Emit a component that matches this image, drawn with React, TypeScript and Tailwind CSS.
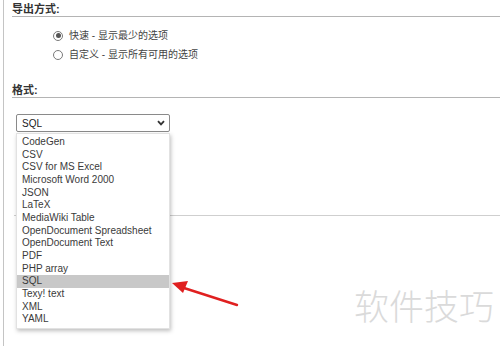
import React from "react";

const formats = [
  "CodeGen",
  "CSV",
  "CSV for MS Excel",
  "Microsoft Word 2000",
  "JSON",
  "LaTeX",
  "MediaWiki Table",
  "OpenDocument Spreadsheet",
  "OpenDocument Text",
  "PDF",
  "PHP array",
  "SQL",
  "Texy! text",
  "XML",
  "YAML",
];

const Radio = ({ checked, label }: { checked?: boolean; label: string }) => (
  <div className="flex items-center h-[19px]">
    <span className="w-[10px] h-[10px] rounded-full border border-[#7a7a7a] bg-white flex items-center justify-center">
      {checked && <span className="w-[5px] h-[5px] rounded-full bg-[#555]" />}
    </span>
    <span className="ml-[6px] text-[10px] text-[#444]">{label}</span>
  </div>
);

export default function App() {
  return (
    <div
      className="relative w-[500px] h-[346px] overflow-hidden bg-white"
      style={{ fontFamily: '"Liberation Sans", Arial, "Noto Sans CJK SC", sans-serif' }}
    >
      <div className="ml-[3px] h-full border-l border-[#c4c4c4] pl-[8px]">
        <div className="pt-[3px] leading-[13px] text-[11px] font-bold text-[#333] border-b border-[#b4b4b4]">
          导出方式:
        </div>
        <div className="mt-[9px] ml-[41px]">
          <Radio checked label="快速 - 显示最少的选项" />
          <Radio label="自定义 - 显示所有可用的选项" />
        </div>
        <div className="mt-[20px] leading-[13px] text-[11px] font-bold text-[#333] border-b border-[#b4b4b4]">
          格式:
        </div>
        <div className="relative mt-[16px] ml-[4px] w-[154px]">
          <div className="h-[18px] border border-[#8a8a8a] rounded-[2px] flex items-center justify-between pl-[5px] pr-[4px] text-[10px] text-[#222]">
            <span>SQL</span>
            <svg width="8" height="6" viewBox="0 0 8 6">
              <path d="M1 1.2 L4 4.4 L7 1.2" fill="none" stroke="#333" strokeWidth="1.8" />
            </svg>
          </div>
          <div className="absolute left-0 top-[19px] w-[154px] z-10 bg-white border border-[#e2e2e2] shadow-[1px_2px_4px_rgba(0,0,0,0.25)] pt-[2px] pb-[2px]">
            {formats.map((f) => (
              <div
                key={f}
                className={
                  "h-[12.67px] leading-[12.67px] pl-[5px] text-[10px] text-[#3a3a3a] " +
                  (f === "SQL" ? "bg-[#c8c8c8]" : "")
                }
              >
                {f}
              </div>
            ))}
          </div>
        </div>
        <div className="mt-[83px] border-b border-[#cfcfcf] ml-[2px]" />
      </div>

      <svg className="absolute left-0 top-0 z-20" width="500" height="346" viewBox="0 0 500 346">
        <path d="M237 305 L184 288" stroke="#e02020" strokeWidth="2.4" strokeLinecap="round" />
        <path d="M172 283 L188 281 L183 293 Z" fill="#e02020" />
      </svg>

      <div
        className="absolute left-[354px] top-[285px] text-[35px] leading-[40px] text-[#dadada]"
        style={{ fontFamily: '"Noto Sans CJK SC", sans-serif', fontWeight: 300 }}
      >
        软件技巧
      </div>
    </div>
  );
}
